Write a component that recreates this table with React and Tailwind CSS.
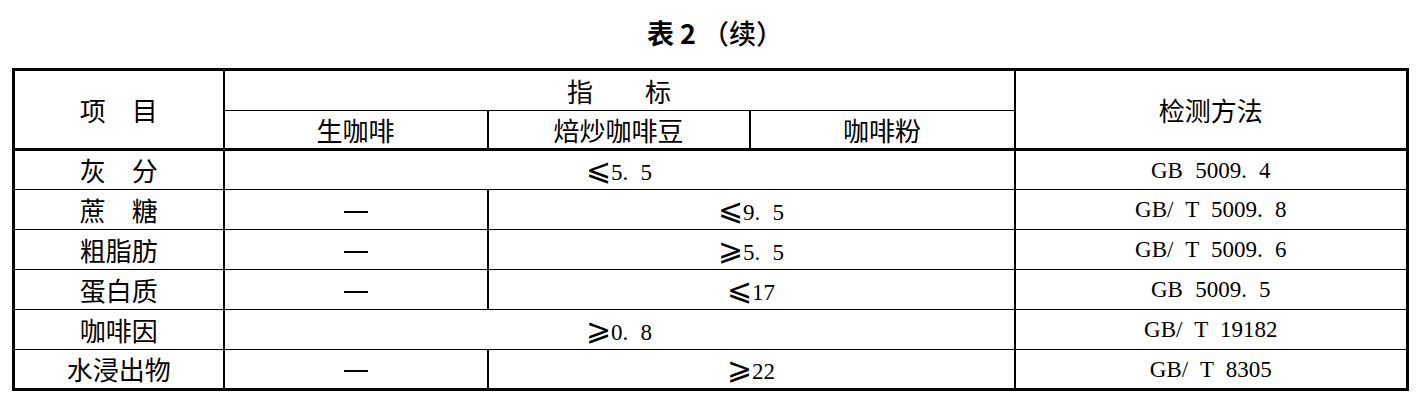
import React from "react";

const zh = "font-['Noto_Sans_CJK_SC',sans-serif] text-[26px] font-normal";
const num = "font-['Liberation_Serif','DejaVu_Serif','DejaVu_Sans','Noto_Sans_CJK_SC',serif] text-[23px] [word-spacing:0.28em]";
const cell = "border-y border-x-2 border-black text-center align-middle p-0 leading-none";

const rows = [
  { name: "灰　分", span: "all", sign: "⩽", value: "5. 5", method: "GB 5009. 4" },
  { name: "蔗　糖", span: "two", sign: "⩽", value: "9. 5", method: "GB/ T 5009. 8" },
  { name: "粗脂肪", span: "two", sign: "⩾", value: "5. 5", method: "GB/ T 5009. 6" },
  { name: "蛋白质", span: "two", sign: "⩽", value: "17", method: "GB 5009. 5" },
  { name: "咖啡因", span: "all", sign: "⩾", value: "0. 8", method: "GB/ T 19182" },
  { name: "水浸出物", span: "two", sign: "⩾", value: "22", method: "GB/ T 8305" },
];

function Value({ sign, value }) {
  return (
    <span>
      <span className="text-[30px] font-['DejaVu_Sans','DejaVu_Serif',serif] font-light">{sign}</span>
      {value}
    </span>
  );
}

export default function App() {
  return (
    <div className="w-[1422px] h-[411px] bg-white text-black">
      {/* 标题 */}
      <div className="h-[68px] flex items-center justify-center gap-[6px] pb-[1px] pl-[8px] font-['Noto_Sans_CJK_SC',sans-serif] text-[27px]">
        <span className="font-bold">表 2</span>
        <span className="font-medium">（续）</span>
      </div>

      <table className="ml-[12px] w-[1394px] table-fixed border-collapse border-[3px] border-black">
        <colgroup>
          <col className="w-[210px]" />
          <col className="w-[264px]" />
          <col className="w-[262px]" />
          <col className="w-[265px]" />
          <col className="w-[393px]" />
        </colgroup>
        <tbody>
          <tr className="h-[41px]">
            <td rowSpan={2} className={`${cell} ${zh} border-b-[3px]`}>项　目</td>
            <td colSpan={3} className={`${cell} ${zh}`}>指　　标</td>
            <td rowSpan={2} className={`${cell} ${zh} border-b-[3px]`}>检测方法</td>
          </tr>
          <tr className="h-[39px]">
            <td className={`${cell} ${zh} border-b-[3px]`}>生咖啡</td>
            <td className={`${cell} ${zh} border-b-[3px]`}>焙炒咖啡豆</td>
            <td className={`${cell} ${zh} border-b-[3px]`}>咖啡粉</td>
          </tr>
          {rows.map((r) => (
            <tr key={r.name} className="h-[40px]">
              <td className={`${cell} ${zh}`}>{r.name}</td>
              {r.span === "all" ? (
                <td colSpan={3} className={`${cell} ${num}`}>
                  <Value sign={r.sign} value={r.value} />
                </td>
              ) : (
                <>
                  <td className={`${cell} ${num}`}>
                    <span className="inline-block w-[24px] h-[2px] bg-black align-middle" />
                  </td>
                  <td colSpan={2} className={`${cell} ${num}`}>
                    <Value sign={r.sign} value={r.value} />
                  </td>
                </>
              )}
              <td className={`${cell} ${num}`}>{r.method}</td>
            </tr>
          ))}
        </tbody>
      </table>
    </div>
  );
}
